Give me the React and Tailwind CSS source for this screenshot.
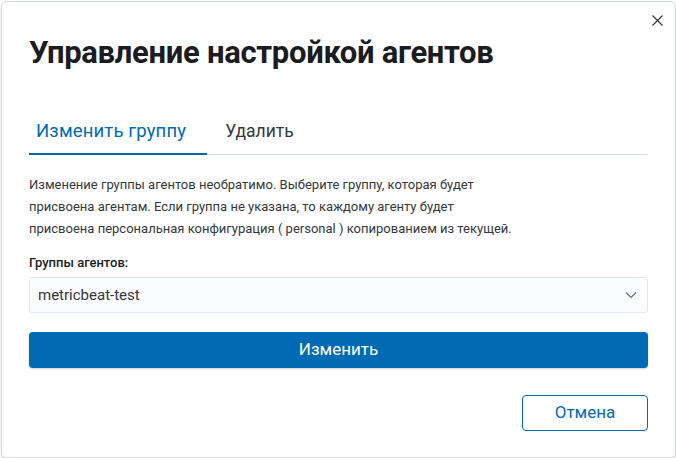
export default function App() {
  return (
    <div className="w-[676px] h-[458px] bg-white" style={{ fontFamily: 'Roboto, "Noto Sans", sans-serif' }}>
      <div className="relative w-[675px] h-[457px] ml-px mt-px rounded-t-md rounded-b-sm border border-[#d3dae6] bg-white shadow-[0_1px_2px_rgba(0,0,0,0.15)] px-[27px]">
        <button className="absolute right-[10px] top-[10px] w-[16px] h-[16px] flex items-center justify-center text-[#343741]">
          <svg width="11" height="11" viewBox="0 0 11 11" fill="none" stroke="currentColor" strokeWidth="1.2">
            <path d="M0.5 0.5L10.5 10.5M10.5 0.5L0.5 10.5" />
          </svg>
        </button>
        <h1 className="pt-[31px] text-[31px] leading-[40px] font-bold tracking-[-0.3px] text-[#1a1c21]">
          Управление настройкой агентов
        </h1>
        <div className="mt-[42px] flex border-b border-[#d3dae6]">
          <div className="pl-[7px] pr-[21px] pb-[10px] pt-[4px] text-[18.5px] leading-[24px] tracking-[0.15px] text-[#006bb4] border-b-2 border-[#006bb4] -mb-px">
            Изменить группу
          </div>
          <div className="pl-[18px] pb-[10px] pt-[4px] text-[17.5px] leading-[24px] text-[#343741]">
            Удалить
          </div>
        </div>
        <p className="mt-[19px] text-[13px] leading-[22px] text-[#343741]">
          Изменение группы агентов необратимо. Выберите группу, которая будет
          <br />
          присвоена агентам. Если группа не указана, то каждому агенту будет
          <br />
          присвоена персональная конфигурация ( personal ) копированием из текущей.
        </p>
        <div className="mt-[14px] text-[13px] leading-[18px] font-medium text-[#1a1c21]">Группы агентов:</div>
        <div className="mt-[5px] h-[36px] flex items-center justify-between rounded-[3px] border border-[#e3e8f0] bg-[#fbfcfd] pl-[8px] pr-[10px]">
          <span className="text-[15px] text-[#343741]">metricbeat-test</span>
          <svg width="12" height="8" viewBox="0 0 12 8" fill="none" stroke="#69707d" strokeWidth="1.2">
            <path d="M1 1.5L6 6.5L11 1.5" />
          </svg>
        </div>
        <button className="mt-[19px] w-full h-[36px] rounded-[4px] bg-[#006bb4] text-white text-[17px] shadow-[0_1px_2px_rgba(0,0,0,0.2)]">
          Изменить
        </button>
        <div className="mt-[27px] flex justify-end">
          <button className="w-[126px] h-[36px] rounded-[4px] border border-[#006bb4] text-[#006bb4] text-[17px] bg-white">
            Отмена
          </button>
        </div>
      </div>
    </div>
  );
}
